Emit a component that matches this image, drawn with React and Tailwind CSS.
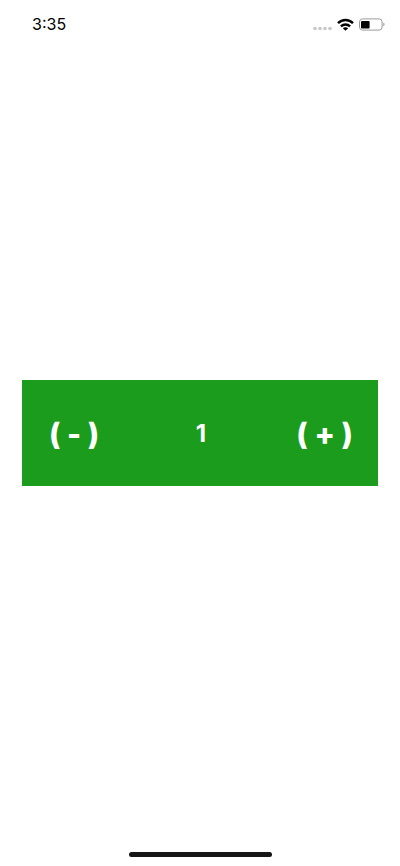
import { useState } from "react";

function StatusBar() {
  return (
    <header className="flex h-12 items-center justify-between pl-8 pr-[15px] text-black">
      <time className="text-base">3:35</time>
      <div className="flex items-center gap-[5px]">
        <svg width="19" height="14" viewBox="0 0 19 14" fill="#c8c8c8" aria-label="No signal">
          <circle cx="2" cy="11.5" r="1.8" />
          <circle cx="7" cy="11.5" r="1.8" />
          <circle cx="12" cy="11.5" r="1.8" />
          <circle cx="17" cy="11.5" r="1.8" />
        </svg>
        <svg width="17" height="13" viewBox="0 0 17 13" fill="none" stroke="currentColor" strokeWidth="2.4" aria-label="Wi-Fi">
          <path d="M1 5.2C5.2 1 11.8 1 16 5.2" />
          <path d="M3.9 8.4C6.5 5.8 10.5 5.8 13.1 8.4" />
          <path d="M8.5 12.8L5.8 10.2C7.3 8.8 9.7 8.8 11.2 10.2Z" fill="currentColor" stroke="none" />
        </svg>
        <svg width="26" height="13" viewBox="0 0 26 13" aria-label="Battery">
          <rect x="0.5" y="0.9" width="22.6" height="11.2" rx="3" fill="none" stroke="#9b9b9b" />
          <rect x="2" y="2.9" width="8.6" height="7.6" rx="1" fill="#000" />
          <path d="M24.3 4.6C26 5.2 26 7.8 24.3 8.4Z" fill="#9b9b9b" />
        </svg>
      </div>
    </header>
  );
}

export default function App() {
  const [count, setCount] = useState(1);

  return (
    <div className="flex min-h-screen flex-col bg-white font-['Inter',sans-serif]">
      <StatusBar />
      <main className="flex flex-1 items-center px-[22px]">
        <div className="grid w-full grid-cols-[1fr_auto_1fr] items-center bg-[#1c9c1c] pt-[33px] pr-[25px] pb-[31px] pl-[27px] font-bold text-white">
          <button
            type="button"
            aria-label="Decrease"
            className="justify-self-start text-[30px] leading-[42px] font-extrabold"
            onClick={() => setCount(count - 1)}
          >
            ( - )
          </button>
          <output className="text-2xl">{count}</output>
          <button
            type="button"
            aria-label="Increase"
            className="justify-self-end text-[30px] leading-[42px] font-extrabold"
            onClick={() => setCount(count + 1)}
          >
            ( + )
          </button>
        </div>
      </main>
      <footer className="flex h-12 items-end justify-center pb-[9px]">
        <div className="h-[5px] w-[143px] rounded-full bg-[#161616]" />
      </footer>
    </div>
  );
}
